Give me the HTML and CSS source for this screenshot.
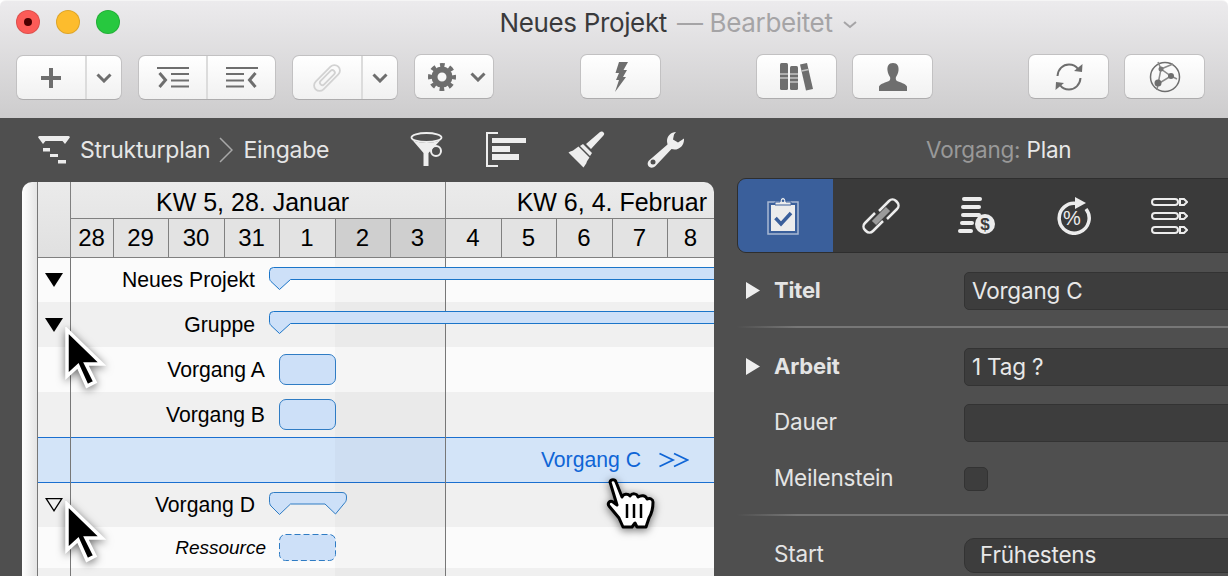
FILE: index.html
```html
<!DOCTYPE html>
<html lang="de">
<head>
    <meta charset="UTF-8">
    <title>Neues Projekt</title>
    <link rel="stylesheet" href="styles.css">
</head>
<body>
<div class="window">

    <!-- Title bar and toolbar -->
    <div class="titlebar">
        <div class="title-row">
            <div class="lights">
                <span class="light light-red"><i></i></span>
                <span class="light light-yellow"></span>
                <span class="light light-green"></span>
            </div>
            <div class="title">Neues Projekt <span class="title-state">— Bearbeitet</span>
                <svg class="title-chevron" width="14" height="8" viewBox="0 0 14 8"><path d="M1 1l6 5 6-5" fill="none" stroke="#a5a4a6" stroke-width="2"/></svg>
            </div>
        </div>
        <div class="toolbar">
            <div class="tool-group tool-low group-add">
                <button class="tool">
                    <svg width="20" height="20" viewBox="0 0 20 20"><path d="M10 0v20M0 10h20" stroke="#6e6e6e" stroke-width="4"/></svg>
                </button>
                <button class="tool tool-menu">
                    <svg width="16" height="10" viewBox="0 0 16 10"><path d="M1.500 1.500L8 8l6.500-6.500" fill="none" stroke="#6e6e6e" stroke-width="3"/></svg>
                </button>
            </div>
            <div class="tool-group tool-low group-indent">
                <button class="tool">
                    <svg width="32" height="21" viewBox="0 0 32 21" fill="none" stroke="#6e6e6e"><path d="M0 1h32M14 7h18M14 13.500h18M14 19.500h18" stroke-width="2"/><path d="M2.500 6l6 7-6 7" stroke-width="3"/></svg>
                </button>
                <button class="tool">
                    <svg width="32" height="21" viewBox="0 0 32 21" fill="none" stroke="#6e6e6e"><path d="M0 1h32M0 7h18M0 13.500h18M0 19.500h18" stroke-width="2"/><path d="M29.500 6l-6 7 6 7" stroke-width="3"/></svg>
                </button>
            </div>
            <div class="tool-group tool-low group-link">
                <button class="tool">
                    <svg width="28" height="28" viewBox="0 0 28 28" fill="none" stroke="#d2d2d2" stroke-width="1.800"><rect x="8.500" y="-2" width="11" height="32" rx="5.500" transform="rotate(45 14 14)"/><rect x="11.500" y="4" width="5" height="19" rx="2.500" transform="rotate(45 14 14)"/></svg>
                </button>
                <button class="tool tool-menu">
                    <svg width="16" height="10" viewBox="0 0 16 10"><path d="M1.500 1.500L8 8l6.500-6.500" fill="none" stroke="#6e6e6e" stroke-width="3"/></svg>
                </button>
            </div>
            <div class="tool-group group-gear">
                <button class="tool tool-gear">
                    <svg width="28" height="28" viewBox="0 0 28 28" fill="none" stroke="#6e6e6e"><circle cx="14" cy="14" r="12" stroke-width="4" stroke-dasharray="4.7 4.72" stroke-dashoffset="2.350"/><circle cx="14" cy="14" r="7.500" stroke-width="6"/></svg>
                    <svg width="16" height="10" viewBox="0 0 16 10"><path d="M1.500 1.500L8 8l6.500-6.500" fill="none" stroke="#6e6e6e" stroke-width="3"/></svg>
                </button>
            </div>
            <button class="tool-single group-bolt">
                <svg width="14" height="30" viewBox="0 0 14 30"><path d="M5 0h9L9.500 8H13L9 15h3L1 30l4-12H2l3-7H1.500z" fill="#6e6e6e"/></svg>
            </button>
            <button class="tool-single group-books">
                <svg width="33" height="29" viewBox="0 0 33 29" fill="#6e6e6e"><rect x="0" y="1" width="8" height="27" rx="1.500"/><rect x="10" y="4" width="8" height="24" rx="1.500"/><path d="M20 2.500l7-1.500 6 26-7 1.500z"/><path d="M0 12h8M0 16h8M10 12h8M10 16h8M10 20h8M21.500 9l7-1.500" stroke="#c4c4c4" stroke-width="1.500"/></svg>
            </button>
            <button class="tool-single group-person">
                <svg width="28" height="28" viewBox="0 0 28 28"><path d="M14 0c4.500 0 6 3.500 5.500 7.500-.3 3-1.500 5-2.500 6.500-.5 1.500-.2 3 1 4 3 1.500 8.500 2.500 10 5.500V28H0v-4.500c1.500-3 7-4 10-5.500 1.200-1 1.500-2.500 1-4-1-1.500-2.200-3.500-2.500-6.500C8 3.500 9.500 0 14 0z" fill="#6e6e6e"/></svg>
            </button>
            <button class="tool-single group-sync">
                <svg width="30" height="30" viewBox="0 0 30 30"><g fill="none" stroke="#6e6e6e" stroke-width="2"><path d="M3.500 14C4 7 9 2.500 15 2.500c4 0 7 1.500 9 4.500"/><path d="M26.500 16c-.5 7-5.500 11.500-11.500 11.500-4 0-7-1.500-9-4.500"/></g><path d="M20 9l8 1 .5-8zM10 21l-8-1-.5 8z" fill="#6e6e6e"/></svg>
            </button>
            <button class="tool-single group-net">
                <svg width="32" height="32" viewBox="0 0 32 32"><circle cx="16" cy="16" r="14.500" fill="none" stroke="#6e6e6e" stroke-width="1.500"/><path d="M9 1l3 7 10 7 6 3M12 8l-3 15 13-8M9 23l-1 6M12 8l12-5" fill="none" stroke="#8a8a8a" stroke-width="1.500"/><circle cx="12" cy="8" r="2.500" fill="#777"/><circle cx="22" cy="15" r="3" fill="#6e6e6e"/><circle cx="9" cy="22" r="3.500" fill="#6e6e6e"/></svg>
            </button>
        </div>
    </div>

    <div class="workspace">

        <!-- Left: gantt chart -->
        <div class="plan">
            <div class="plan-header">
                <svg class="icon-structure" width="32" height="28" viewBox="0 0 32 28" fill="#ececec"><path d="M1.500 0h29c1 0 1.500 .8 1.300 1.500L27 8l-2.500-3h-17L5 8 .2 1.500C0 .8.500 0 1.500 0z"/><rect x="5" y="12" width="7" height="3.500"/><rect x="12" y="18" width="8" height="3"/><rect x="20" y="24" width="8" height="3.500"/></svg>
                <div class="crumbs">
                    <span>Strukturplan</span>
                    <svg width="14" height="26" viewBox="0 0 14 26"><path d="M1 1l12 12L1 25" fill="none" stroke="#a8a8a8" stroke-width="1.500"/></svg>
                    <span class="crumb-last">Eingabe</span>
                </div>
                <div class="plan-tools">
                    <svg class="icon-funnel" width="33" height="35" viewBox="0 0 33 35"><ellipse cx="16.500" cy="5.500" rx="15" ry="4.500" fill="none" stroke="#eee" stroke-width="1.800"/><path d="M1.500 7C6 12 27 12 31.500 7L18.500 21V34h-5V21z" fill="#eee"/><circle cx="26" cy="19" r="5" fill="none" stroke="#eee" stroke-width="2"/></svg>
                    <svg class="icon-bars" width="40" height="35" viewBox="0 0 40 35" fill="#eee"><path d="M0 0h12v2H2v31h10v2H0z"/><rect x="6" y="6" width="34" height="5"/><rect x="6" y="14" width="18" height="6"/><rect x="6" y="22" width="27" height="6"/></svg>
                    <svg class="icon-brush" width="38" height="37" viewBox="0 0 38 37" fill="#eee"><path d="M33 1c1-1 3.500-.5 4 1 .5 1 0 2-1 3L24 18l-5-5z"/><path d="M16 13l9 9-2 3-10-10z"/><path d="M11.500 15.500l11 11-2 3c-1 1.500-1 3-2 4l-2 3-15-15c2-1.500 3-1 4.500-2z"/></svg>
                    <svg class="icon-wrench" width="38" height="37" viewBox="0 0 38 37" fill="none"><path d="M29 1c-5 0-9 4-9 9 0 1.500.5 2.500.5 3.500L2 29.500c-2.500 3-1 5.500.5 6.500s4 1 6-1L24.500 18c1 .3 2 .5 3 .5 5.500 0 10-5 9.500-11l-6 4-5-3 1-5z" fill="#eee"/><circle cx="6" cy="31" r="2.500" fill="#4f4f4f"/></svg>
                </div>
            </div>

            <div class="gantt">
                <div class="gantt-strip"></div>
                <div class="gantt-table">
                    <div class="gantt-head">
                        <div class="head-gutter"></div>
                        <div class="head-time">
                            <div class="weeks">
                                <div class="week week-first">KW 5, 28. Januar</div>
                                <div class="week week-second">KW 6, 4. Februar</div>
                            </div>
                            <div class="days">
                                <div class="day">28</div>
                                <div class="day">29</div>
                                <div class="day">30</div>
                                <div class="day">31</div>
                                <div class="day">1</div>
                                <div class="day day-off">2</div>
                                <div class="day day-off">3</div>
                                <div class="day">4</div>
                                <div class="day">5</div>
                                <div class="day">6</div>
                                <div class="day">7</div>
                                <div class="day">8</div>
                            </div>
                        </div>
                    </div>

                    <div class="gantt-rows">
                        <div class="weekend-shade"></div>
                        <div class="line-gutter"></div>
                        <div class="line-week"></div>

                        <div class="row row-first">
                            <div class="toggle"><svg width="18" height="14" viewBox="0 0 18 14"><path d="M0 0h18L9 14z" fill="#000"/></svg></div>
                            <div class="name name-summary">Neues Projekt</div>
                            <svg class="bar" width="446" height="24" viewBox="0 0 446 24"><path d="M4.500.5H446v12H21.500L10.500 22.500 2 14.500C.8 13.300.5 12 .5 10V4.500Q.5.5 4.500.5z" fill="#cde0f8" stroke="#1b75c9"/></svg>
                        </div>
                        <div class="row row-alt">
                            <div class="toggle"><svg width="18" height="14" viewBox="0 0 18 14"><path d="M0 0h18L9 14z" fill="#000"/></svg></div>
                            <div class="name name-summary">Gruppe</div>
                            <svg class="bar" width="446" height="24" viewBox="0 0 446 24"><path d="M4.500.5H446v12H21.500L10.500 22.500 2 14.500C.8 13.300.5 12 .5 10V4.500Q.5.5 4.500.5z" fill="#cde0f8" stroke="#1b75c9"/></svg>
                        </div>
                        <div class="row">
                            <div class="toggle"></div>
                            <div class="name">Vorgang A</div>
                            <div class="task"></div>
                        </div>
                        <div class="row row-alt">
                            <div class="toggle"></div>
                            <div class="name">Vorgang B</div>
                            <div class="task"></div>
                        </div>
                        <div class="row row-selected">
                            <div class="toggle"></div>
                            <div class="name name-selected">Vorgang C</div>
                            <svg class="more" width="30" height="16" viewBox="0 0 30 16" fill="none" stroke="#0f65d6" stroke-width="1.800"><path d="M.5 1.500L14 8 .5 14.500M15 1.500L28.500 8 15 14.500"/></svg>
                        </div>
                        <div class="row row-alt row-after">
                            <div class="toggle"><svg width="18" height="14" viewBox="0 0 18 14"><path d="M1.200.7h15.600L9 12.800z" fill="none" stroke="#000" stroke-width="1.300"/></svg></div>
                            <div class="name name-summary">Vorgang D</div>
                            <svg class="bar bar-short" width="78" height="24" viewBox="0 0 78 24"><path d="M4.500.5H73Q77.500.5 77.500 5c0 3-.5 4.500-1.500 5.500L66.500 22 56 12H21.500L10.500 22.500 2 14C.8 12.800.5 11 .5 9V4.500Q.5.5 4.500.5z" fill="#cde0f8" stroke="#2f7cc4"/></svg>
                        </div>
                        <div class="row row-res">
                            <div class="toggle"></div>
                            <div class="name name-res">Ressource</div>
                            <svg class="task-res" width="57" height="27" viewBox="0 0 57 27"><rect x=".5" y=".5" width="56" height="26" rx="6" fill="#cde0f8" stroke="#2f7cc4" stroke-dasharray="6 3"/></svg>
                        </div>
                        <div class="row row-alt"></div>
                    </div>
                </div>
            </div>
        </div>

        <!-- Right: inspector -->
        <div class="inspector">
            <div class="inspector-title"><span class="dim">Vorgang:</span> Plan</div>

            <div class="tabs">
                <div class="tab tab-active">
                    <svg width="32" height="38" viewBox="0 0 32 38"><rect x="1" y="5" width="30" height="32" fill="none" stroke="#a9b9d3" stroke-width="1.500"/><rect x="4" y="8" width="24" height="26" fill="#ececec"/><path d="M8 8V5h5c0-6 6-6 6 0h5v3z" fill="#ececec" stroke="#3a5f9b"/><circle cx="16" cy="3.800" r="1.300" fill="#3a5f9b"/><path d="M8.500 21l5.500 6 10-11" fill="none" stroke="#3a5f9b" stroke-width="3.500"/></svg>
                </div>
                <div class="tab">
                    <svg width="38" height="38" viewBox="0 0 38 38" fill="none"><path d="M21 24L11 34c-2 2-5 2-7 0l-1-1c-2-2-2-5 0-7l10-10" stroke="#ececec" stroke-width="2.500"/><path d="M17 14L27 4c2-2 5-2 7 0l1 1c2 2 2 5 0 7L25 22" stroke="#ececec" stroke-width="2.500"/><path d="M12 26L26 12" stroke="#9a9a9a" stroke-width="6"/></svg>
                </div>
                <div class="tab">
                    <svg width="38" height="38" viewBox="0 0 38 38" fill="#ececec"><rect x="4" y="0" width="20" height="4" rx="2"/><rect x="3" y="8" width="20" height="4" rx="2"/><rect x="3" y="16" width="20" height="4" rx="2"/><rect x="2" y="24" width="14" height="4" rx="2"/><rect x="0" y="32" width="15" height="4" rx="2"/><circle cx="27" cy="27" r="10"/><text class="coin-sign" x="27" y="33" text-anchor="middle">$</text></svg>
                </div>
                <div class="tab">
                    <svg width="36" height="38" viewBox="0 0 36 38"><path d="M22 6.500A15 15 0 1 0 31 12" fill="none" stroke="#ececec" stroke-width="3.500"/><path d="M20 0l11 6-11 6z" fill="#ececec"/><text class="percent-sign" x="17" y="28" text-anchor="middle">%</text></svg>
                </div>
                <div class="tab">
                    <svg width="37" height="36" viewBox="0 0 37 36" fill="none" stroke="#ececec" stroke-width="2"><rect x="1" y="1" width="26" height="6" rx="3"/><rect x="1" y="15" width="26" height="6" rx="3"/><rect x="1" y="29" width="26" height="6" rx="3"/><path d="M29 1h4l3 3-3 3h-4zM29 15h4l3 3-3 3h-4zM29 29h4l3 3-3 3h-4z"/></svg>
                </div>
            </div>

            <div class="form-row form-first">
                <label class="label label-main"><svg width="14" height="17" viewBox="0 0 14 17"><path d="M0 0l14 8.500L0 17z" fill="#eee"/></svg>Titel</label>
                <div class="field">Vorgang C</div>
            </div>
            <div class="divider"></div>
            <div class="form-row">
                <label class="label label-main"><svg width="14" height="17" viewBox="0 0 14 17"><path d="M0 0l14 8.500L0 17z" fill="#eee"/></svg>Arbeit</label>
                <div class="field">1 Tag ?</div>
            </div>
            <div class="form-row">
                <label class="label">Dauer</label>
                <div class="field"></div>
            </div>
            <div class="form-row">
                <label class="label">Meilenstein</label>
                <div class="checkbox"></div>
            </div>
            <div class="divider"></div>
            <div class="form-row">
                <label class="label">Start</label>
                <div class="field field-select">Frühestens</div>
            </div>
        </div>
    </div>

    <!-- Cursors drawn over the chart -->
    <svg class="cursor cursor-one" width="44" height="66" viewBox="0 0 44 66"><path d="M4 3v46l11-10 9 20 8-4-9-18h16z" fill="#000" stroke="#fff" stroke-width="3.500" stroke-linejoin="miter"/></svg>
    <svg class="cursor cursor-two" width="44" height="66" viewBox="0 0 44 66"><path d="M4 3v46l11-10 9 20 8-4-9-18h16z" fill="#000" stroke="#fff" stroke-width="3.500" stroke-linejoin="miter"/></svg>
    <svg class="cursor cursor-hand" width="52" height="56" viewBox="0 0 52 56"><path d="M4 5c1-3 5-3 6 0l6 15c1-3 6-4 8-1 2-3 7-3 8 1 3-2 8-2 9 2 3-1 6 0 6 3 0 6-1 11-4 16l-3 9h-9l-2-4-3 4H17l-4-9-10-12c-2-3 1-6 4-4l4 3z" fill="#fff" stroke="#000" stroke-width="3" stroke-linejoin="round"/><path d="M21 27v14M28 27v14M35 27v14" stroke="#000" stroke-width="2.500"/></svg>
</div>
</body>
</html>
```

FILE: styles.css
```css
/* Common styles */
html, body {
    margin: 0;
    padding: 0;
    background-color: #ffffff;
}

.window {
    position: relative;
    width: 1228px;
    height: 576px;
    overflow: hidden;
    font-family: "Inter", "Liberation Sans", sans-serif;
}

/* Title bar */
.titlebar {
    height: 118px;
    box-sizing: border-box;
    background: linear-gradient(#ecebed, #cdcccd);
    border-top: 1px solid #f5f5f5;
    border-radius: 6px 6px 0 0;
}

.title-row {
    position: relative;
    height: 43px;
    display: flex;
    align-items: center;
    justify-content: center;
}

.lights {
    position: absolute;
    left: 16px;
    top: 9px;
    display: flex;
    gap: 16px;
}

.light {
    width: 24px;
    height: 24px;
    box-sizing: border-box;
    border-radius: 50%;
    border: 1px solid rgba(0, 0, 0, 0.12);
    display: flex;
    align-items: center;
    justify-content: center;
}

.light i {
    width: 8px;
    height: 8px;
    border-radius: 50%;
    background-color: #4d0000;
}

.light-red { background-color: #fc5b57; }
.light-yellow { background-color: #fdbc2d; }
.light-green { background-color: #27c83f; }

.title {
    font-size: 26px;
    letter-spacing: -0.35px;
    color: #3a3a3c;
    margin-left: 128px;
}

.title-state {
    color: #a5a4a6;
    margin-left: 3px;
}

.title-chevron {
    vertical-align: 3px;
    margin-left: 3px;
}

/* Toolbar */
.toolbar {
    display: flex;
    align-items: flex-start;
    padding: 10px 0 0 16px;
}

.tool {
    padding: 0;
    border: none;
    background: none;
    display: flex;
    align-items: center;
    justify-content: center;
    flex: 1;
}

.tool-group, .tool-single {
    display: flex;
    height: 45px;
    box-sizing: border-box;
    background: linear-gradient(#ffffff, #f1f1f1);
    border: 1px solid #c2c1c2;
    border-bottom-color: #adacad;
    border-radius: 7px;
}

.tool-low {
    margin-top: 1px;
    margin-right: 16px;
}

.tool-group .tool + .tool {
    border-left: 2px solid #dcdcdc;
}

.tool-menu {
    flex: none;
    width: 36px;
}

.tool-gear {
    gap: 14px;
    padding-left: 6px;
}

.tool-single {
    flex: none;
    width: 81px;
    padding: 0;
    align-items: center;
    justify-content: center;
}

.group-add, .group-link { width: 106px; }
.group-indent { width: 138px; }
.group-gear { width: 80px; }
.group-bolt { margin-left: 86px; }
.group-books { margin-left: 95px; }
.group-person { margin-left: 15px; }
.group-sync { margin-left: 95px; }
.group-net { margin-left: 15px; }

/* Dark workspace */
.workspace {
    display: flex;
    height: 458px;
    background-color: #4f4f4f;
}

.plan {
    flex: none;
    width: 737px;
    box-sizing: border-box;
    padding-left: 22px;
}

.plan-header {
    height: 64px;
    display: flex;
    align-items: center;
    position: relative;
}

.icon-structure {
    margin-left: 16px;
}

.crumbs {
    display: flex;
    align-items: center;
    gap: 9px;
    margin-left: 10px;
    font-size: 23px;
    letter-spacing: -0.25px;
    color: #e6e6e6;
}

.crumb-last {
    margin-left: 1px;
}

.plan-tools {
    display: flex;
    align-items: center;
    margin-left: 81px;
    margin-top: -1px;
}

.icon-bars { margin-left: 43px; }
.icon-brush { margin-left: 41px; }
.icon-wrench { margin-left: 42px; }

/* Gantt chart */
.gantt {
    display: flex;
    width: 692px;
    height: 394px;
    border-radius: 10px 10px 0 0;
    overflow: hidden;
    font-family: "Liberation Sans", Arial, sans-serif;
    color: #000000;
}

.gantt-strip {
    flex: none;
    width: 15px;
    background: linear-gradient(to right, #ffffff, #e4e4e4);
}

.gantt-table {
    flex: 1;
    border-left: 1px solid #777777;
    min-width: 0;
}

.gantt-head {
    display: flex;
    height: 76px;
    box-sizing: border-box;
    border-bottom: 1px solid #808080;
    background: linear-gradient(#ebebeb, #e0e0e0);
}

.head-gutter {
    flex: none;
    width: 32px;
    border-right: 1px solid #808080;
}

.head-time {
    flex: 1;
    min-width: 0;
}

.weeks {
    display: grid;
    grid-template-columns: 375px 1fr;
    height: 37px;
    box-sizing: border-box;
    border-bottom: 1px solid #808080;
}

.week {
    font-size: 25px;
    line-height: 40px;
    white-space: nowrap;
}

.week-first {
    padding-left: 85px;
    border-right: 1px solid #808080;
}

.week-second {
    text-align: right;
    padding-right: 7px;
}

.days {
    display: grid;
    grid-template-columns: 43px 55px 56px 55px 56px 55px 55px 56px 55px 56px 55px 1fr;
    height: 38px;
}

.day {
    font-size: 24px;
    line-height: 38px;
    text-align: center;
    padding-right: 1px;
    border-right: 1px solid #808080;
    background-color: #e3e3e3;
}

.day:last-child {
    border-right: none;
}

.day-off {
    background-color: #cfcfcf;
}

.gantt-rows {
    position: relative;
}

.weekend-shade {
    position: absolute;
    left: 297px;
    width: 110px;
    top: 0;
    height: 320px;
    background-color: rgba(0, 0, 0, 0.022);
    z-index: 1;
}

.line-gutter, .line-week {
    position: absolute;
    top: 0;
    height: 320px;
    width: 1px;
    background-color: #777777;
    z-index: 1;
}

.line-gutter { left: 32px; }
.line-week { left: 407px; }

.row {
    display: flex;
    align-items: center;
    height: 45px;
    box-sizing: border-box;
    background-color: #fbfbfb;
    white-space: nowrap;
}

.row-first { height: 44px; }
.row-alt { background-color: #f0f0f0; }
.row-after { height: 44px; }
.row-res { height: 41px; }

.row-selected {
    height: 46px;
    background-color: #d3e4f8;
    border-top: 1px solid #1a6fd0;
    border-bottom: 1px solid #1a6fd0;
}

.toggle {
    flex: none;
    width: 33px;
    display: flex;
    justify-content: center;
    padding-right: 1px;
    box-sizing: border-box;
}

.name {
    flex: none;
    width: 194px;
    margin-right: 14px;
    font-size: 21.2px;
    text-align: right;
}

.name-summary {
    width: 184px;
}

.name-res {
    font-size: 19px;
    font-style: italic;
    width: 195px;
    margin-right: 13px;
}

.name-selected {
    width: 570px;
    margin-right: 18px;
    color: #0f65d6;
}

.more {
    flex: none;
    position: relative;
    z-index: 2;
}

.bar {
    flex: none;
    position: relative;
    z-index: 2;
    margin-top: -3px;
}

.task, .task-res {
    flex: none;
    position: relative;
    z-index: 2;
}

.task {
    width: 57px;
    height: 31px;
    box-sizing: border-box;
    background-color: #cde0f8;
    border: 1px solid #2f7cc4;
    border-radius: 7px;
}

/* Inspector */
.inspector {
    flex: 1;
    min-width: 0;
    overflow: hidden;
    color: #e8e8e8;
}

.inspector-title {
    height: 60px;
    box-sizing: border-box;
    padding: 18px 0 0 189px;
    font-size: 22.5px;
    letter-spacing: -0.2px;
    white-space: nowrap;
}

.dim {
    color: #999999;
}

.tabs {
    display: flex;
    align-items: center;
    height: 75px;
    margin-right: -10px;
    box-sizing: border-box;
    background-color: #3a3a3a;
    border: 1px solid #2e2e2e;
    border-radius: 9px 0 0 9px;
    overflow: hidden;
}

.tab {
    flex: none;
    width: 96px;
    height: 100%;
    display: flex;
    align-items: center;
    justify-content: center;
}

.tab-active {
    width: 95px;
    padding-right: 6px;
    box-sizing: border-box;
    background-color: #3a5f9b;
}

.coin-sign {
    font-family: "Liberation Sans", sans-serif;
    font-size: 17px;
    font-weight: bold;
    fill: #3a3a3a;
}

.percent-sign {
    font-family: "Liberation Sans", sans-serif;
    font-size: 20px;
    fill: #ececec;
}

.form-row {
    display: flex;
    align-items: center;
    height: 38px;
    margin-top: 18px;
}

.form-first {
    margin-top: 19px;
}

.divider {
    height: 2px;
    margin: 16px 0 20px;
    background: linear-gradient(to right, transparent, #777777 60px);
}

.label {
    flex: none;
    position: relative;
    width: 227px;
    box-sizing: border-box;
    padding-left: 37px;
    margin-top: -4px;
    font-size: 22.5px;
    letter-spacing: -0.2px;
    color: #e4e4e4;
}

.label svg {
    position: absolute;
    left: 9px;
    top: 5px;
}

.label-main {
    font-size: 22px;
    font-weight: 700;
    margin-top: -3px;
}

.field {
    flex: 1;
    height: 38px;
    box-sizing: border-box;
    margin-right: -10px;
    padding-left: 7px;
    font-size: 22.5px;
    letter-spacing: -0.2px;
    line-height: 36px;
    background-color: #3d3d3d;
    border: 1px solid #333333;
    border-radius: 5px;
}

.field-select {
    height: 35px;
    line-height: 31px;
    padding-left: 15px;
    border-radius: 10px;
}

.checkbox {
    width: 24px;
    height: 24px;
    box-sizing: border-box;
    background-color: #3d3d3d;
    border: 1px solid #333333;
    border-radius: 5px;
}

/* Cursors */
.cursor {
    position: absolute;
    z-index: 10;
    filter: drop-shadow(0 2px 4px rgba(0, 0, 0, 0.55));
}

.cursor-one { left: 63px; top: 327px; }
.cursor-two { left: 63px; top: 501px; }
.cursor-hand { left: 606px; top: 477px; }
```
